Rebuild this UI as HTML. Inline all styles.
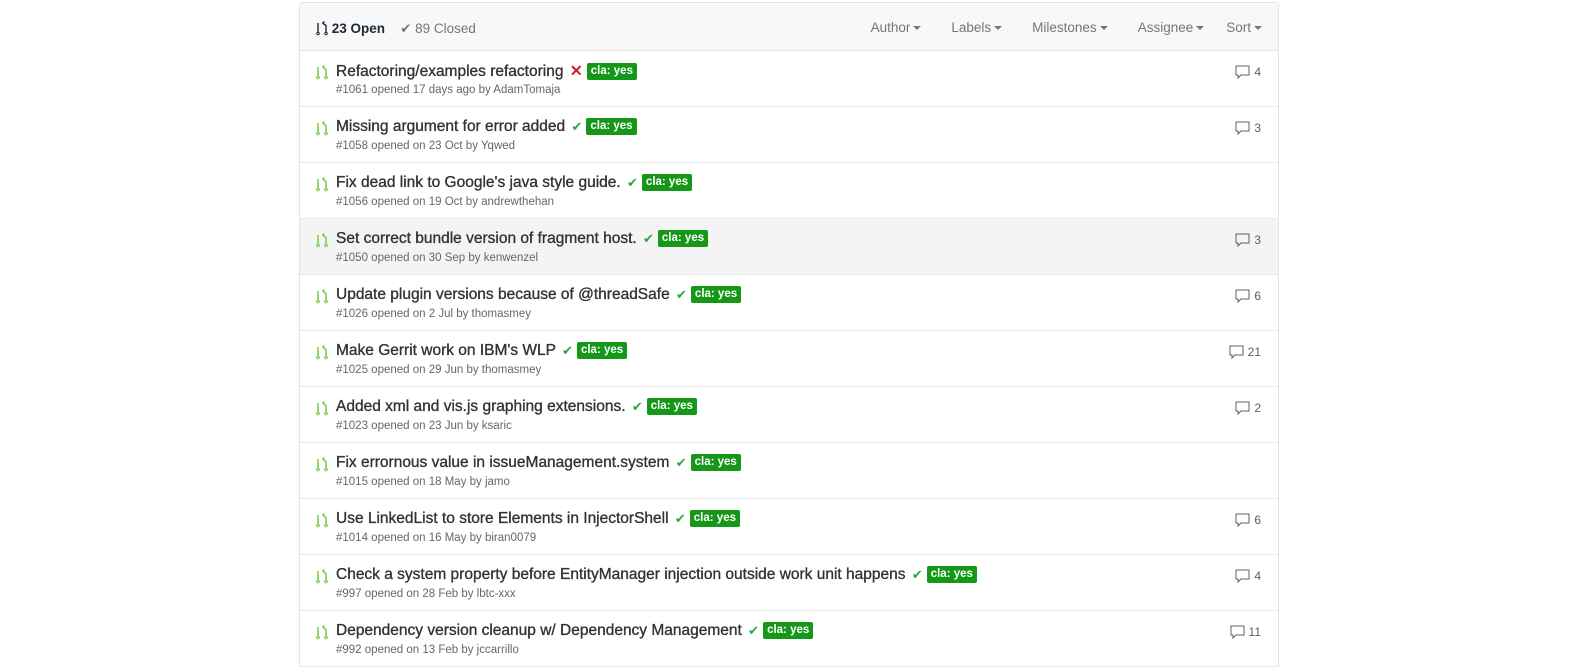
<!DOCTYPE html>
<html><head><meta charset="utf-8"><style>
body{margin:0;background:#fff;font-family:"Liberation Sans",sans-serif;width:1573px;height:669px;overflow:hidden}
.box{position:absolute;left:299px;top:2px;width:978px;border:1px solid #e1e4e8;border-radius:3px 3px 0 0;border-bottom:none}
.hd{height:47px;background:#f6f8fa;border-bottom:1px solid #e1e4e8;position:relative;font-size:13.5px;color:#767676}
.hd .l{position:absolute;left:16px;top:17px}
.hd .open{color:#24292e;font-weight:bold}
.hd .r{position:absolute;right:16px;top:17px;display:flex;gap:0}
.hd .r span{margin-left:30px}
.caret{display:inline-block;border-top:4px solid #777;border-left:4px solid transparent;border-right:4px solid transparent;vertical-align:middle;margin-left:3px}
.row{height:55px;border-bottom:1px solid #e8e8e8;position:relative}
.row.hl{background:#f4f4f4}
.ic{position:absolute;left:16px;top:13px}
.t{position:absolute;left:36px;top:11px;font-size:15.5px;color:#333;-webkit-text-stroke:0.35px #333;white-space:nowrap}
.m{position:absolute;left:36px;top:33px;font-size:11.5px;color:#666;white-space:nowrap}
.ok{color:#28a745;-webkit-text-stroke:0;font-size:13px;margin-left:2px}
.x{color:#cb2431;-webkit-text-stroke:0;font-weight:bold;margin-left:2px}
.lbl{display:inline-block;background:#159818;color:#fff;-webkit-text-stroke:0;font-size:11.5px;font-weight:bold;padding:1px 4px;border-radius:2px;margin-left:4px;vertical-align:2px;line-height:15px}
.c{position:absolute;right:17px;top:14px;font-size:12px;color:#586069}
.c svg{vertical-align:-3px;margin-right:4px}
</style></head><body>
<div class="box">
<div class="hd"><div class="l"><svg width="12" height="16" viewBox="0 0 12 16" style="vertical-align:-3px"><path d="M2 3v10M10 13V5.5L6.5 3M6.5 3l2-1.5M6.5 3l2 1.5" stroke="#24292e" stroke-width="1.4" fill="none"/><circle cx="2" cy="13.5" r="1.3" fill="none" stroke="#24292e"/><circle cx="10" cy="13.5" r="1.3" fill="none" stroke="#24292e"/></svg> <span class="open">23 Open</span>&nbsp;&nbsp;&nbsp;&nbsp;<span>✔ 89 Closed</span></div>
<div class="r"><span>Author<i class="caret"></i></span><span>Labels<i class="caret"></i></span><span>Milestones<i class="caret"></i></span><span>Assignee<i class="caret"></i></span><span style="margin-left:22px">Sort<i class="caret"></i></span></div></div>
<div class="row"><svg class="ic" width="12" height="16" viewBox="0 0 12 16"><path d="M2 3v9M10 12V5.5L6.5 3M6.5 3l2-1.5M6.5 3l2 1.5" stroke="#6cc644" stroke-width="1.4" fill="none"/><circle cx="2" cy="13.5" r="1.3" fill="none" stroke="#6cc644"/><circle cx="10" cy="13.5" r="1.3" fill="none" stroke="#6cc644"/></svg><div class="t">Refactoring/examples refactoring <span class="x">✕</span><span class="lbl">cla: yes</span></div><div class="m">#1061 opened 17 days ago by AdamTomaja</div><div class="c"><svg width="15" height="14" viewBox="0 0 15 14"><path d="M1 1h13v9H6l-3 3v-3H1z" fill="none" stroke="#586069"/></svg>4</div></div>
<div class="row"><svg class="ic" width="12" height="16" viewBox="0 0 12 16"><path d="M2 3v9M10 12V5.5L6.5 3M6.5 3l2-1.5M6.5 3l2 1.5" stroke="#6cc644" stroke-width="1.4" fill="none"/><circle cx="2" cy="13.5" r="1.3" fill="none" stroke="#6cc644"/><circle cx="10" cy="13.5" r="1.3" fill="none" stroke="#6cc644"/></svg><div class="t">Missing argument for error added <span class="ok">✔</span><span class="lbl">cla: yes</span></div><div class="m">#1058 opened on 23 Oct by Yqwed</div><div class="c"><svg width="15" height="14" viewBox="0 0 15 14"><path d="M1 1h13v9H6l-3 3v-3H1z" fill="none" stroke="#586069"/></svg>3</div></div>
<div class="row"><svg class="ic" width="12" height="16" viewBox="0 0 12 16"><path d="M2 3v9M10 12V5.5L6.5 3M6.5 3l2-1.5M6.5 3l2 1.5" stroke="#6cc644" stroke-width="1.4" fill="none"/><circle cx="2" cy="13.5" r="1.3" fill="none" stroke="#6cc644"/><circle cx="10" cy="13.5" r="1.3" fill="none" stroke="#6cc644"/></svg><div class="t">Fix dead link to Google's java style guide. <span class="ok">✔</span><span class="lbl">cla: yes</span></div><div class="m">#1056 opened on 19 Oct by andrewthehan</div></div>
<div class="row hl"><svg class="ic" width="12" height="16" viewBox="0 0 12 16"><path d="M2 3v9M10 12V5.5L6.5 3M6.5 3l2-1.5M6.5 3l2 1.5" stroke="#6cc644" stroke-width="1.4" fill="none"/><circle cx="2" cy="13.5" r="1.3" fill="none" stroke="#6cc644"/><circle cx="10" cy="13.5" r="1.3" fill="none" stroke="#6cc644"/></svg><div class="t">Set correct bundle version of fragment host. <span class="ok">✔</span><span class="lbl">cla: yes</span></div><div class="m">#1050 opened on 30 Sep by kenwenzel</div><div class="c"><svg width="15" height="14" viewBox="0 0 15 14"><path d="M1 1h13v9H6l-3 3v-3H1z" fill="none" stroke="#586069"/></svg>3</div></div>
<div class="row"><svg class="ic" width="12" height="16" viewBox="0 0 12 16"><path d="M2 3v9M10 12V5.5L6.5 3M6.5 3l2-1.5M6.5 3l2 1.5" stroke="#6cc644" stroke-width="1.4" fill="none"/><circle cx="2" cy="13.5" r="1.3" fill="none" stroke="#6cc644"/><circle cx="10" cy="13.5" r="1.3" fill="none" stroke="#6cc644"/></svg><div class="t">Update plugin versions because of @threadSafe <span class="ok">✔</span><span class="lbl">cla: yes</span></div><div class="m">#1026 opened on 2 Jul by thomasmey</div><div class="c"><svg width="15" height="14" viewBox="0 0 15 14"><path d="M1 1h13v9H6l-3 3v-3H1z" fill="none" stroke="#586069"/></svg>6</div></div>
<div class="row"><svg class="ic" width="12" height="16" viewBox="0 0 12 16"><path d="M2 3v9M10 12V5.5L6.5 3M6.5 3l2-1.5M6.5 3l2 1.5" stroke="#6cc644" stroke-width="1.4" fill="none"/><circle cx="2" cy="13.5" r="1.3" fill="none" stroke="#6cc644"/><circle cx="10" cy="13.5" r="1.3" fill="none" stroke="#6cc644"/></svg><div class="t">Make Gerrit work on IBM's WLP <span class="ok">✔</span><span class="lbl">cla: yes</span></div><div class="m">#1025 opened on 29 Jun by thomasmey</div><div class="c"><svg width="15" height="14" viewBox="0 0 15 14"><path d="M1 1h13v9H6l-3 3v-3H1z" fill="none" stroke="#586069"/></svg>21</div></div>
<div class="row"><svg class="ic" width="12" height="16" viewBox="0 0 12 16"><path d="M2 3v9M10 12V5.5L6.5 3M6.5 3l2-1.5M6.5 3l2 1.5" stroke="#6cc644" stroke-width="1.4" fill="none"/><circle cx="2" cy="13.5" r="1.3" fill="none" stroke="#6cc644"/><circle cx="10" cy="13.5" r="1.3" fill="none" stroke="#6cc644"/></svg><div class="t">Added xml and vis.js graphing extensions. <span class="ok">✔</span><span class="lbl">cla: yes</span></div><div class="m">#1023 opened on 23 Jun by ksaric</div><div class="c"><svg width="15" height="14" viewBox="0 0 15 14"><path d="M1 1h13v9H6l-3 3v-3H1z" fill="none" stroke="#586069"/></svg>2</div></div>
<div class="row"><svg class="ic" width="12" height="16" viewBox="0 0 12 16"><path d="M2 3v9M10 12V5.5L6.5 3M6.5 3l2-1.5M6.5 3l2 1.5" stroke="#6cc644" stroke-width="1.4" fill="none"/><circle cx="2" cy="13.5" r="1.3" fill="none" stroke="#6cc644"/><circle cx="10" cy="13.5" r="1.3" fill="none" stroke="#6cc644"/></svg><div class="t">Fix errornous value in issueManagement.system <span class="ok">✔</span><span class="lbl">cla: yes</span></div><div class="m">#1015 opened on 18 May by jamo</div></div>
<div class="row"><svg class="ic" width="12" height="16" viewBox="0 0 12 16"><path d="M2 3v9M10 12V5.5L6.5 3M6.5 3l2-1.5M6.5 3l2 1.5" stroke="#6cc644" stroke-width="1.4" fill="none"/><circle cx="2" cy="13.5" r="1.3" fill="none" stroke="#6cc644"/><circle cx="10" cy="13.5" r="1.3" fill="none" stroke="#6cc644"/></svg><div class="t">Use LinkedList to store Elements in InjectorShell <span class="ok">✔</span><span class="lbl">cla: yes</span></div><div class="m">#1014 opened on 16 May by biran0079</div><div class="c"><svg width="15" height="14" viewBox="0 0 15 14"><path d="M1 1h13v9H6l-3 3v-3H1z" fill="none" stroke="#586069"/></svg>6</div></div>
<div class="row"><svg class="ic" width="12" height="16" viewBox="0 0 12 16"><path d="M2 3v9M10 12V5.5L6.5 3M6.5 3l2-1.5M6.5 3l2 1.5" stroke="#6cc644" stroke-width="1.4" fill="none"/><circle cx="2" cy="13.5" r="1.3" fill="none" stroke="#6cc644"/><circle cx="10" cy="13.5" r="1.3" fill="none" stroke="#6cc644"/></svg><div class="t">Check a system property before EntityManager injection outside work unit happens <span class="ok">✔</span><span class="lbl">cla: yes</span></div><div class="m">#997 opened on 28 Feb by lbtc-xxx</div><div class="c"><svg width="15" height="14" viewBox="0 0 15 14"><path d="M1 1h13v9H6l-3 3v-3H1z" fill="none" stroke="#586069"/></svg>4</div></div>
<div class="row"><svg class="ic" width="12" height="16" viewBox="0 0 12 16"><path d="M2 3v9M10 12V5.5L6.5 3M6.5 3l2-1.5M6.5 3l2 1.5" stroke="#6cc644" stroke-width="1.4" fill="none"/><circle cx="2" cy="13.5" r="1.3" fill="none" stroke="#6cc644"/><circle cx="10" cy="13.5" r="1.3" fill="none" stroke="#6cc644"/></svg><div class="t">Dependency version cleanup w/ Dependency Management <span class="ok">✔</span><span class="lbl">cla: yes</span></div><div class="m">#992 opened on 13 Feb by jccarrillo</div><div class="c"><svg width="15" height="14" viewBox="0 0 15 14"><path d="M1 1h13v9H6l-3 3v-3H1z" fill="none" stroke="#586069"/></svg>11</div></div>
</div>
</body></html>
